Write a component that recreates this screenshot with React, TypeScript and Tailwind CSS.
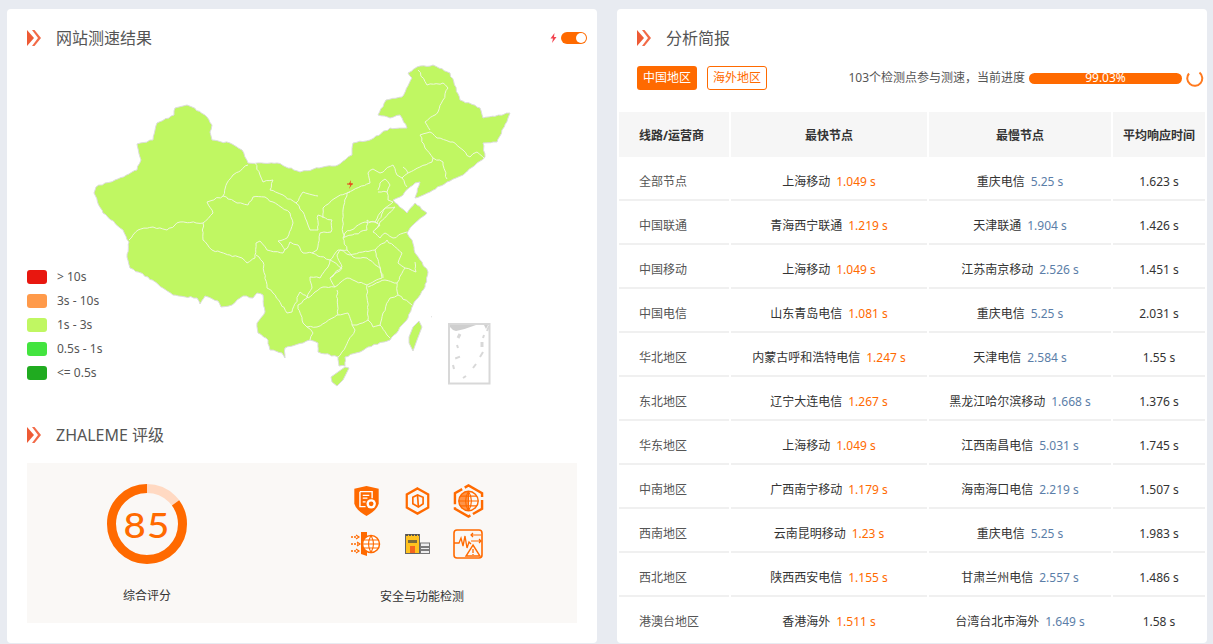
import React from 'react';

const rows = [
  { name: '全部节点', fast: '上海移动', fastTime: '1.049 s', slow: '重庆电信', slowTime: '5.25 s', avg: '1.623 s' },
  { name: '中国联通', fast: '青海西宁联通', fastTime: '1.219 s', slow: '天津联通', slowTime: '1.904 s', avg: '1.426 s' },
  { name: '中国移动', fast: '上海移动', fastTime: '1.049 s', slow: '江苏南京移动', slowTime: '2.526 s', avg: '1.451 s' },
  { name: '中国电信', fast: '山东青岛电信', fastTime: '1.081 s', slow: '重庆电信', slowTime: '5.25 s', avg: '2.031 s' },
  { name: '华北地区', fast: '内蒙古呼和浩特电信', fastTime: '1.247 s', slow: '天津电信', slowTime: '2.584 s', avg: '1.55 s' },
  { name: '东北地区', fast: '辽宁大连电信', fastTime: '1.267 s', slow: '黑龙江哈尔滨移动', slowTime: '1.668 s', avg: '1.376 s' },
  { name: '华东地区', fast: '上海移动', fastTime: '1.049 s', slow: '江西南昌电信', slowTime: '5.031 s', avg: '1.745 s' },
  { name: '中南地区', fast: '广西南宁移动', fastTime: '1.179 s', slow: '海南海口电信', slowTime: '2.219 s', avg: '1.507 s' },
  { name: '西南地区', fast: '云南昆明移动', fastTime: '1.23 s', slow: '重庆电信', slowTime: '5.25 s', avg: '1.983 s' },
  { name: '西北地区', fast: '陕西西安电信', fastTime: '1.155 s', slow: '甘肃兰州电信', slowTime: '2.557 s', avg: '1.486 s' },
  { name: '港澳台地区', fast: '香港海外', fastTime: '1.511 s', slow: '台湾台北市海外', slowTime: '1.649 s', avg: '1.58 s' },
];

const legend = [
  { color: 'bg-[#e8170f]', label: '> 10s' },
  { color: 'bg-[#ff9a4a]', label: '3s - 10s' },
  { color: 'bg-[#c0f762]', label: '1s - 3s' },
  { color: 'bg-[#43e43f]', label: '0.5s - 1s' },
  { color: 'bg-[#20ab20]', label: '<= 0.5s' },
];

const mainland =
  '187,105 192,107 207,117 212,125 210,132 212,140 230,143 242,150 248,163 277,163 300,172 323,167 338,165 352,155 353,143 370,140 390,128 407,128 400,115 390,118 378,115 386,100 402,97 412,78 408,73 417,67 433,65 450,73 460,100 480,108 483,118 510,113 508,118 497,142 483,143 485,157 477,163 463,175 447,182 430,192 415,198 420,182 415,183 400,197 393,200 407,213 415,203 427,213 415,223 407,233 412,240 415,253 422,262 428,272 425,287 413,305 408,318 390,340 368,347 360,352 345,357 345,366 339,366 338,357 318,352 318,343 310,340 303,343 285,348 285,358 282,353 270,350 268,340 258,333 257,323 265,312 263,295 257,293 253,298 243,296 232,305 221,307 218,301 205,296 200,304 197,298 173,295 148,277 130,268 127,257 129,242 123,230 103,213 94,193 96,187 105,183 115,180 137,170 141,160 137,144 153,140 157,123 174,115 175,108';

const borders = [
  '129,240 138,230 153,227 167,230 180,222 203,223 213,213 207,202 223,196 227,183 233,175 248,165',
  '223,196 237,203 248,205 253,197 265,197 273,202 290,213 293,223 287,238 278,241 285,250',
  '203,223 203,240 212,250 230,255 242,258 247,263 255,258 256,243 260,241 267,250 283,253 290,242 298,245 303,253 312,253 330,260 342,268 330,278 335,287 323,287 315,292 308,298 300,292 292,312 287,313 273,293 267,288 263,262 256,255',
  '330,260 328,267 320,278 310,277 312,288 307,298 298,305 303,323 307,327 317,327 337,315 348,313 352,325 355,330 342,352 338,357',
  '303,323 307,327 313,333 310,340',
  '335,287 347,278 367,285 368,320 357,325 352,325',
  '337,290 338,315',
  '368,320 373,327 380,325 387,335 390,338',
  '368,287 385,280 397,283 398,295 390,298 383,313 380,326',
  '398,295 412,305',
  '397,283 405,268 416,272 415,262',
  '383,278 375,250 387,240 402,253 398,263 405,268',
  '375,250 350,255 340,250 337,255 342,267 330,278',
  '367,285 382,278 380,268 367,258 353,257 347,250 338,250 330,260',
  '347,250 343,238 367,230 367,220 377,223 385,208 395,207 380,222 375,230',
  '347,193 343,210 343,233 345,237',
  '347,193 370,183 368,173 373,169 380,173 393,165 397,175 402,178 407,187',
  '403,167 408,173 402,178',
  '408,173 432,162 433,158 443,162 447,179',
  '420,135 430,132 437,138 453,142 463,150 470,157 477,152 484,158',
  '420,135 425,148 433,158',
  '418,70 427,85 443,83 448,88 443,100 438,112 425,122 430,130',
  '378,190 380,183 385,179 390,185 387,192 378,192',
  '387,192 388,200 393,202',
  '393,202 380,213 375,222 365,222 345,233 343,238',
  '375,222 380,225 373,232 380,238 385,233 393,238 407,232',
  '255,163 260,175 263,182 273,180 270,190 283,195 296,203 303,192 318,196',
  '296,203 303,212 308,225 310,230 318,230 318,215 332,220 331,232 320,233 317,250 312,253',
  '350,192 337,197 323,208 323,218',
];

// the source map has jagged, hand-traced edges
function roughen(points: string, amp = 0.7) {
  const pts = points.split(' ').map((p) => p.split(',').map(Number));
  const out: string[] = [];
  let n = 1;
  pts.forEach((p, i) => {
    out.push(`${p[0]},${p[1]}`);
    const next = pts[i + 1];
    if (!next) return;
    const len = Math.hypot(next[0] - p[0], next[1] - p[1]);
    const steps = Math.floor(len / 3);
    for (let s = 1; s < steps; s++) {
      const t = s / steps;
      const a = Math.abs(Math.sin(n * 12.9898) * 43758.5453) % 1;
      const b = Math.abs(Math.sin(n * 78.233) * 24634.6345) % 1;
      n++;
      const x = p[0] + (next[0] - p[0]) * t + (a - 0.5) * 2 * amp;
      const y = p[1] + (next[1] - p[1]) * t + (b - 0.5) * 2 * amp;
      out.push(`${x.toFixed(1)},${y.toFixed(1)}`);
    }
  });
  return out.join(' ');
}

function SectionArrow() {
  return (
    <svg width="14" height="16" viewBox="0 0 14 16">
      <path d="M0 0 L7 8 L0 16 Z" fill="#ee5a34" />
      <path d="M5 0 L7.500 0 L14 8 L7.500 16 L5 16 L11 8 Z" fill="#f26a47" />
    </svg>
  );
}

function SectionTitle({ children }: { children: React.ReactNode }) {
  return (
    <div className="flex items-center gap-[15px] text-[16px] leading-[24px] text-[#555]">
      <SectionArrow />
      <span>{children}</span>
    </div>
  );
}

function ChinaMap() {
  return (
    <svg width="425" height="335" viewBox="90 60 425 335" className="block">
      <polygon points={roughen(mainland)} fill="#c0f762" stroke="#dcdcdc" strokeWidth="1" strokeLinejoin="round" />
      {borders.map((b, i) => (
        <polyline key={i} points={roughen(b, 0.8)} fill="none" stroke="#eef8dc" strokeWidth="1" strokeLinejoin="round" />
      ))}
      <polygon points="419,321 422,327 417,340 413,351 409,343 409,337 413,327" fill="#c0f762" stroke="#dcdcdc" strokeWidth="1" />
      <polygon points="331,377 345,367 349,368 343,380 337,386 332,382" fill="#c0f762" stroke="#dcdcdc" strokeWidth="1" />
      <path d="M351 180 L348.500 184.500 L350.500 184.500 L349 189 L352.500 183.500 L350.500 183.500 Z" fill="#e8431a" />
      <path d="M347 184 H353" stroke="#e8431a" strokeWidth="1" />
      <path d="M431 316.500 l1 .5" stroke="#ddd" strokeWidth="1" />
      <rect x="449" y="324" width="40.500" height="59.500" fill="none" stroke="#d8d8d8" strokeWidth="2" />
      <path d="M450 325 H476 Q466 329 456 331 Q452 330 450 327 Z" fill="#cfcfcf" />
      <path d="M484 325 H488 L486 329 Z" fill="#cfcfcf" />
      <g stroke="#d8d8d8" strokeWidth="2" fill="none">
        <path d="M460 334 L458 338" strokeWidth="3" />
        <path d="M457 345 L458 348" />
        <path d="M460 357 L455 358" transform="rotate(-10 458 357)" />
        <path d="M453 365 L454 369" />
        <path d="M466 376 L463 378" />
        <path d="M476 364 L473 368" />
        <path d="M483 352 L480 357" />
        <path d="M482 342 V347" strokeWidth="3" />
        <path d="M484 335 L483 338" />
        <path d="M489 326 L487 331" />
      </g>
    </svg>
  );
}

function ScoreRing() {
  return (
    <div className="relative h-[80px] w-[80px]">
      <svg width="80" height="80" viewBox="0 0 80 80" className="block">
        <circle cx="40" cy="40" r="35.500" fill="none" stroke="#ffd9c2" strokeWidth="9" />
        <circle
          cx="40"
          cy="40"
          r="35.500"
          fill="none"
          stroke="#ff6a00"
          strokeWidth="9"
          strokeDasharray="189.600 223.100"
          transform="rotate(-90 40 40) scale(1 -1) translate(0 -80)"
        />
      </svg>
      <span className="absolute inset-0 flex scale-x-110 items-center justify-center text-[35px] font-medium leading-none tracking-[1px] text-[#ff6a00] [font-family:Lato,'Noto_Sans',sans-serif]">
        85
      </span>
    </div>
  );
}

function ShieldIcon() {
  return (
    <svg width="27" height="30" viewBox="0 0 28 32">
      <path d="M1 3 L14 0 L27 3 V19 Q25 26 14 32 Q3 26 1 19 Z" fill="#ff6a00" />
      <path d="M7 6 H20 V13 M7 6 V22 H13" fill="none" stroke="#fff" strokeWidth="1.500" />
      <path d="M10 10 H17 M10 13 H15 M10 17 H13" stroke="#fff" strokeWidth="1.300" />
      <circle cx="19" cy="19" r="5" fill="#fff" />
      <circle cx="19" cy="19" r="2.500" fill="#ff6a00" />
    </svg>
  );
}

function HexIcon() {
  return (
    <svg width="25" height="28" viewBox="0 0 26 30" fill="none" stroke="#ff6a00" strokeWidth="2.400">
      <path d="M13 1.500 L24.500 8 V22 L13 28.500 L1.500 22 V8 Z" />
      <path d="M8 11 L13 8.500 L19 11 V18 L14 21.500 L8 18 Z" strokeWidth="1.800" />
      <path d="M13 8.500 L14 21.500" strokeWidth="1.800" />
    </svg>
  );
}

function GlobeHexIcon() {
  return (
    <svg width="31" height="34" viewBox="0 0 32 34" fill="none" stroke="#ff6a00">
      <path d="M16 1 L30 9 V25 L16 33 L2 25 V9 Z" strokeWidth="2.500" strokeDasharray="20 3" />
      <circle cx="16" cy="17" r="10" strokeWidth="1.500" />
      <path d="M16 7 V27 M6 17 H26 M7.500 12 H24.500 M7.500 22 H24.500" strokeWidth="1.200" />
      <path d="M16 7 Q22 17 16 27 M16 7 Q10 17 16 27" strokeWidth="1.200" />
      <path d="M16 7 A10 10 0 0 0 16 27 Z" fill="#ff6a00" fillOpacity="0.7" stroke="none" />
    </svg>
  );
}

function DoorGlobeIcon() {
  return (
    <svg width="30" height="26" viewBox="0 0 30 26" fill="none">
      <path d="M0 6 H6 M0 13 H7 M0 20 H6" stroke="#ff6a00" strokeWidth="1.500" strokeDasharray="2 1" />
      <path d="M5 4 L8 6 L5 8 M6 11 L9 13 L6 15 M5 18 L8 20 L5 22" stroke="#ff6a00" strokeWidth="1.200" />
      <path d="M10 1 H16 V25 L10 23 Z" fill="#ff6a00" />
      <circle cx="20" cy="13" r="8.500" fill="#fff" stroke="#ff6a00" strokeWidth="1.500" />
      <path d="M20 4.500 Q15 13 20 21.500 Q25 13 20 4.500 M11.500 13 H28.500 M13 9 H27 M13 17 H27" stroke="#ff6a00" strokeWidth="1.100" />
    </svg>
  );
}

function ServerIcon() {
  return (
    <svg width="25" height="20" viewBox="0 0 25 20">
      <rect x="0.500" y="0.500" width="14" height="19" fill="#ffc21f" stroke="#666" strokeWidth="1" />
      <path d="M1 1 H14" stroke="#555" strokeWidth="2" strokeDasharray="2 1" />
      <path d="M3 6 H12 V9 H3 Z" fill="#7a6a3a" />
      <rect x="5" y="12" width="5" height="7" fill="#f4661f" />
      <rect x="15.500" y="9" width="9" height="10.500" fill="#eee" stroke="#777" strokeWidth="1" />
      <path d="M16 13 H24 M16 16 H24" stroke="#555" strokeWidth="1.500" />
    </svg>
  );
}

function MonitorIcon() {
  return (
    <svg width="30" height="30" viewBox="0 0 30 30" fill="none" stroke="#ff6a00">
      <rect x="1" y="1" width="28" height="28" rx="3" strokeWidth="1.600" />
      <path d="M1 14 L6 14 L8 9 L10 17 L12 7 L14 19 L16 13 L18 15" strokeWidth="1.300" />
      <path d="M18 6 H28 M20 4 L18 6 L20 8 M18 12 H28 M26 10 L28 12 L26 14" strokeWidth="1.200" />
      <path d="M20 16 L27 27 H13 Z" strokeWidth="1.400" fill="#faf8f6" />
      <path d="M20 20 V24 M20 25 V26" strokeWidth="1.300" />
    </svg>
  );
}

export default function App() {
  return (
    <div className="h-[644px] overflow-hidden bg-[#e8ebf1] pl-[7px] pt-[9px] pr-[6px] [font-family:'Noto_Sans','Noto_Sans_CJK_SC',sans-serif]">
      <div className="flex gap-[20px]">
        {/* left card */}
        <div className="h-[634px] w-[590px] rounded-[4px] bg-white px-[20px] pt-[17px]">
          <div className="flex items-center justify-between">
            <SectionTitle>网站测速结果</SectionTitle>
            <div className="mr-[-10px] flex items-center gap-[4px]">
              <svg width="7" height="10" viewBox="0 0 7 10">
                <path d="M4.500 0 L0.500 5.500 H3 L2 10 L6.500 4 H4 Z" fill="#f2434f" />
              </svg>
              <div className="flex h-[12px] w-[26px] items-center justify-end rounded-full bg-[#ff6a00] pr-[1px]">
                <div className="h-[10px] w-[10px] rounded-full bg-white" />
              </div>
            </div>
          </div>

          <div className="relative h-[360px] pl-[63px] pt-[10px]">
            <ChinaMap />
            <div className="absolute bottom-[30px] left-0 flex flex-col gap-[10px]">
              {legend.map((l) => (
                <div key={l.label} className="flex items-center gap-[10px] text-[12px] leading-[14px] text-[#555]">
                  <div className={`h-[14px] w-[20px] rounded-[3px] ${l.color}`} />
                  <span>{l.label}</span>
                </div>
              ))}
            </div>
          </div>

          <div className="mt-[13px]">
            <SectionTitle>ZHALEME 评级</SectionTitle>
          </div>

          <div className="mt-[16px] flex h-[160px] w-[550px] bg-[#faf8f6]">
            <div className="flex w-[240px] flex-col items-center pt-[21px]">
              <ScoreRing />
              <div className="mt-[23px] text-[12px] leading-[18px] text-[#333]">综合评分</div>
            </div>
            <div className="flex flex-1 flex-col items-center pt-[16px]">
              <div className="mr-[10px] grid grid-cols-[51px_51px_51px] grid-rows-[43px_43px] place-items-center">
                <ShieldIcon />
                <HexIcon />
                <GlobeHexIcon />
                <DoorGlobeIcon />
                <ServerIcon />
                <MonitorIcon />
              </div>
              <div className="mt-[23px] text-[12px] leading-[18px] text-[#333]">安全与功能检测</div>
            </div>
          </div>
        </div>

        {/* right card */}
        <div className="h-[634px] w-[590px] rounded-[4px] bg-white pt-[17px]">
          <div className="pl-[20px]">
            <SectionTitle>分析简报</SectionTitle>
          </div>

          <div className="mt-[16px] flex items-center pl-[20px] pr-[1px]">
            <div className="flex h-[24px] w-[60px] items-center justify-center rounded-[3px] bg-[#ff6a00] text-[12px] text-white">中国地区</div>
            <div className="ml-[10px] flex h-[24px] w-[60px] items-center justify-center rounded-[3px] border border-[#ff6a00] bg-white text-[12px] text-[#ff6a00]">海外地区</div>
            <div className="ml-auto text-[12px] text-[#555]">103个检测点参与测速，当前进度</div>
            <div className="ml-[4px] flex h-[11px] w-[153px] items-center justify-center rounded-full bg-[#ff6a00] text-[12px] leading-none text-white">99.03%</div>
            <svg width="18" height="18" viewBox="0 0 18 18" className="ml-[4px] mr-[2px]">
              <path d="M13.500 3.500 A7.500 7.500 0 1 1 3 4.500" fill="none" stroke="#ff7a1f" strokeWidth="2" />
            </svg>
          </div>

          <div className="mt-[22px] pl-[2px]">
            <div className="grid grid-cols-[110px_196px_182px_92px] gap-x-[2px]">
              {['线路/运营商', '最快节点', '最慢节点', '平均响应时间'].map((h, i) => (
                <div
                  key={h}
                  className={`flex h-[45px] items-center bg-[#f6f6f6] pt-[2px] text-[12px] font-bold text-[#333] ${i === 0 ? 'pl-[20px]' : 'justify-center'}`}
                >
                  {h}
                </div>
              ))}
              {rows.map((r, i) => {
                const line = i === rows.length - 1 ? 'border-transparent' : 'border-[#f0f0f0]';
                return (
                  <React.Fragment key={r.name}>
                    <div className={`flex h-[44px] items-center border-b-2 pl-[20px] pt-[8px] text-[12px] text-[#555] ${line}`}>{r.name}</div>
                    <div className={`flex h-[44px] items-center justify-center gap-[6px] border-b-2 pt-[8px] text-[12px] text-[#333] ${line}`}>
                      <span>{r.fast}</span>
                      <span className="text-[#ff6a00]">{r.fastTime}</span>
                    </div>
                    <div className={`flex h-[44px] items-center justify-center gap-[6px] border-b-2 pt-[8px] text-[12px] text-[#333] ${line}`}>
                      <span>{r.slow}</span>
                      <span className="text-[#5b7ea8]">{r.slowTime}</span>
                    </div>
                    <div className={`flex h-[44px] items-center justify-center border-b-2 pt-[8px] text-[12px] text-[#333] ${line}`}>{r.avg}</div>
                  </React.Fragment>
                );
              })}
            </div>
          </div>
        </div>
      </div>
    </div>
  );
}
